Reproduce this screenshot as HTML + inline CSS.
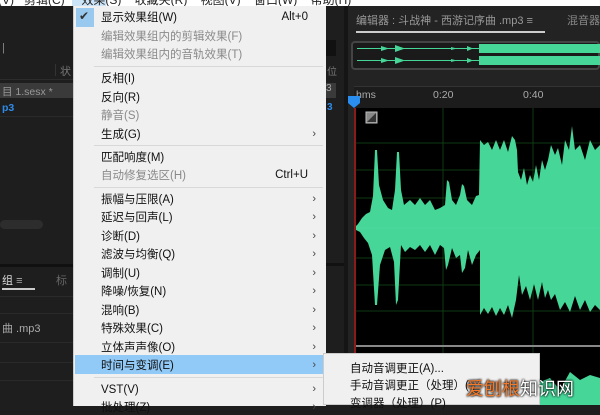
<!DOCTYPE html>
<html><head><meta charset="utf-8"><style>
*{margin:0;padding:0;box-sizing:border-box}
body{width:600px;height:405px;overflow:hidden;background:#1e1e1e;position:relative;font-family:"Liberation Sans","Noto Sans CJK SC",sans-serif}
.a{position:absolute;white-space:nowrap}
.menu{position:absolute;left:73px;top:6px;width:253px;height:400px;background:#f0f0f0;border-left:1px solid #ccc}
.it{position:absolute;left:27px;font-size:11.5px;color:#111;white-space:nowrap;line-height:14px}
.dis{color:#8a8a8a}
.arr{position:absolute;right:10px;font-size:11px;color:#444}
.sep{position:absolute;left:20px;right:3px;height:1px;background:#d8d8d8}
.sc{position:absolute;right:18px;font-size:11.5px;color:#111}
</style></head><body>
<div class="a" style="left:0;top:0;width:600px;height:6px;background:#fff;overflow:hidden">
 <div class="a" style="left:72px;top:0;width:34px;height:6px;background:#cce4f7"></div>
 <div class="a" style="left:-2px;top:-9px;font-size:12px;color:#222">(V)&nbsp;&nbsp; 剪辑(C)&nbsp;&nbsp;&nbsp;&nbsp; 效果(S)&nbsp;&nbsp;&nbsp; 收藏夹(R)&nbsp;&nbsp;&nbsp; 视图(V)&nbsp;&nbsp;&nbsp; 窗口(W)&nbsp;&nbsp;&nbsp; 帮助(H)</div>
</div>
<div class="a" style="left:0;top:6px;width:73px;height:258px;background:#1e1e1e"></div>
<div class="a" style="left:2px;top:42px;font-size:11px;color:#888">|</div>
<div class="a" style="left:0;top:62px;width:73px;height:18px;border-bottom:1px solid #2c2c2c"></div>
<div class="a" style="left:55px;top:64px;width:1px;height:12px;background:#333"></div>
<div class="a" style="left:60px;top:63px;font-size:11px;color:#777">状</div>
<div class="a" style="left:0;top:83px;width:73px;height:15px;background:#3a3a3a"></div>
<div class="a" style="left:2px;top:84px;font-size:10.5px;color:#999">目 1.sesx *</div>
<div class="a" style="left:2px;top:102px;font-size:10.5px;color:#2d8ceb;font-weight:bold">p3</div>
<div class="a" style="left:0;top:116px;width:73px;height:1px;background:#2a2a2a"></div>
<div class="a" style="left:0;top:220px;width:43px;height:9px;background:#2d2d2d;border-radius:5px"></div>
<div class="a" style="left:0;top:264px;width:73px;height:3px;background:#111"></div>
<div class="a" style="left:0;top:267px;width:73px;height:138px;background:#1e1e1e"></div>
<div class="a" style="left:2px;top:272px;font-size:11px;color:#ddd">组 <span style="color:#aaa">≡</span></div>
<div class="a" style="left:2px;top:288px;width:33px;height:2px;background:#ccc"></div>
<div class="a" style="left:56px;top:272px;font-size:11px;color:#666">标</div>
<div class="a" style="left:0;top:296px;width:73px;height:1px;background:#2a2a2a"></div>
<div class="a" style="left:0;top:313px;width:73px;height:1px;background:#2a2a2a"></div>
<div class="a" style="left:2px;top:320px;font-size:11px;color:#aaa">曲 .mp3</div>
<div class="a" style="left:0;top:342px;width:73px;height:1px;background:#2a2a2a"></div>
<div class="a" style="left:0;top:362px;width:73px;height:1px;background:#2a2a2a"></div>
<div class="a" style="left:0;top:380px;width:73px;height:1px;background:#2a2a2a"></div>
<div class="a" style="left:326px;top:6px;width:18px;height:399px;background:#1e1e1e"></div>
<div class="a" style="left:326px;top:40px;width:10px;height:16px;background:#111"></div>
<div class="a" style="left:327px;top:63px;font-size:10px;color:#777">位</div>
<div class="a" style="left:326px;top:83px;width:10px;height:15px;background:#3a3a3a;font-size:10px;color:#aaa">3</div>
<div class="a" style="left:327px;top:102px;font-size:10px;color:#2d8ceb;font-weight:bold">3</div>
<div class="a" style="left:326px;top:263px;width:18px;height:3px;background:#111"></div>
<div class="a" style="left:344px;top:6px;width:4px;height:399px;background:#151515"></div>
<div class="a" style="left:348px;top:6px;width:252px;height:399px;background:#232323"></div>
<div class="a" style="left:356px;top:12px;font-size:11px;color:#999">编辑器 : 斗战神 - 西游记序曲 .mp3 ≡</div>
<div class="a" style="left:356px;top:31px;width:189px;height:2px;background:#ccc"></div>
<div class="a" style="left:567px;top:12px;font-size:11px;color:#888">混音器</div>
<div class="a" style="left:351px;top:41px;width:249px;height:29px;border:2px solid #444;border-radius:4px;background:#1a1a1a"></div>
<svg class="a" style="left:351px;top:41px" width="249" height="29">
<g fill="#45d698">
<rect x="6" y="7" width="122" height="1"/>
<path d="M30 5l8 2.5-8 2.5zM44 4l10 3.5-10 3.5zM100 6l6 1.5-6 1.5zM116 5l6 2.5-6 2.5z"/>
<rect x="128" y="3" width="121" height="9"/>
<rect x="6" y="19" width="122" height="1"/>
<path d="M30 17l8 2.5-8 2.5zM44 16l10 3.5-10 3.5zM100 18l6 1.5-6 1.5zM116 17l6 2.5-6 2.5z"/>
<rect x="128" y="15" width="121" height="9"/>
</g></svg>
<div class="a" style="left:354px;top:86px;width:246px;height:22px;background:#1c1c1c;border-top:1px solid #333"></div>
<div class="a" style="left:356px;top:89px;font-size:10.5px;color:#aaa">hms</div>
<div class="a" style="left:433px;top:89px;font-size:10.5px;color:#aaa">0:20</div>
<div class="a" style="left:523px;top:89px;font-size:10.5px;color:#aaa">0:40</div>
<svg class="a" style="left:354px;top:108px" width="246" height="297">
<rect width="246" height="297" fill="#000"/>
<g stroke="#0f3a12" stroke-width="1">
<line x1="0" y1="35" x2="246" y2="35"/><line x1="0" y1="62" x2="246" y2="62"/><line x1="0" y1="90" x2="246" y2="90"/>
<line x1="0" y1="150" x2="246" y2="150"/><line x1="0" y1="177" x2="246" y2="177"/><line x1="0" y1="203" x2="246" y2="203"/>
<line x1="89" y1="0" x2="89" y2="297"/><line x1="179" y1="0" x2="179" y2="297"/>
</g>
<g fill="#45d698" transform="translate(-354,-108)">
<polygon points="354,228 358,224 362,218 366,214 370,212 373,196 375,150 377,150 379,185 383,200 388,208 392,210 395,190 397,152 399,152 401,190 404,205 410,200 415,205 420,198 425,205 430,200 435,210 440,208 445,205 447,180 449,182 452,200 456,205 460,195 462,184 464,186 467,200 472,205 476,196 479,195 480,140 484,145 488,142 492,150 496,140 500,150 504,140 508,152 512,136 515,140 517,150 518,172 521,180 524,168 527,185 530,175 533,182 536,165 539,180 542,160 545,170 548,160 551,145 555,155 558,148 562,165 565,140 569,150 572,126 575,150 580,145 585,160 590,140 595,150 600,145 600,310 595,305 590,312 585,300 580,310 575,296 570,312 565,302 560,310 555,294 551,300 548,290 545,298 542,282 538,300 534,284 530,300 526,286 522,295 519,275 516,300 512,318 508,305 504,315 500,308 496,316 492,307 488,314 484,308 480,315 480,250 476,255 472,265 468,250 465,268 462,273 460,255 456,258 452,248 448,265 446,270 444,248 440,245 435,255 430,245 425,252 420,245 415,250 410,247 405,252 401,245 398,300 396,305 394,262 390,247 385,250 380,265 377,305 375,305 372,255 368,243 364,238 360,232 356,230"/>
<polygon points="480,405 480,380 490,385 500,378 510,390 520,375 530,392 540,382 550,378 560,390 570,372 580,380 590,375 600,378 600,405"/>
</g>
<line x1="0" y1="120" x2="246" y2="120" stroke="#6fe0b0" stroke-width="0.6" opacity="0.5"/>
<rect x="0" y="237" width="246" height="2" fill="#888"/>
<rect x="0" y="0" width="2" height="297" fill="#8b1a1a"/>
<rect x="12" y="4" width="11" height="11" fill="#888" stroke="#bbb"/>
<path d="M13 14L22 5V14Z" fill="#333"/>
</svg>
<svg class="a" style="left:347px;top:95px" width="14" height="14"><path d="M1 1h12v7l-6 5-6-5z" fill="#2a8ef0"/></svg>
<div class="menu">
 <div class="a" style="left:2px;top:2px;width:18px;height:19px;background:#99c9ef"></div>
 <div class="a" style="left:5px;top:3px;font-size:12px;color:#333">✔</div>
 <div class="it" style="top:5px">显示效果组(W)</div><div class="sc" style="top:5px">Alt+0</div>
 <div class="it dis" style="top:24px">编辑效果组内的剪辑效果(F)</div>
 <div class="it dis" style="top:42px">编辑效果组内的音轨效果(T)</div>
 <div class="sep" style="top:60px"></div>
 <div class="it" style="top:66px">反相(I)</div>
 <div class="it" style="top:85px">反向(R)</div>
 <div class="it dis" style="top:103px">静音(S)</div>
 <div class="it" style="top:122px">生成(G)</div><div class="arr" style="top:122px">›</div>
 <div class="sep" style="top:139px"></div>
 <div class="it" style="top:145px">匹配响度(M)</div>
 <div class="it dis" style="top:163px">自动修复选区(H)</div><div class="sc dis" style="top:163px">Ctrl+U</div>
 <div class="sep" style="top:181px"></div>
 <div class="it" style="top:187px">振幅与压限(A)</div><div class="arr" style="top:187px">›</div>
 <div class="it" style="top:205px">延迟与回声(L)</div><div class="arr" style="top:205px">›</div>
 <div class="it" style="top:224px">诊断(D)</div><div class="arr" style="top:224px">›</div>
 <div class="it" style="top:242px">滤波与均衡(Q)</div><div class="arr" style="top:242px">›</div>
 <div class="it" style="top:261px">调制(U)</div><div class="arr" style="top:261px">›</div>
 <div class="it" style="top:279px">降噪/恢复(N)</div><div class="arr" style="top:279px">›</div>
 <div class="it" style="top:298px">混响(B)</div><div class="arr" style="top:298px">›</div>
 <div class="it" style="top:316px">特殊效果(C)</div><div class="arr" style="top:316px">›</div>
 <div class="it" style="top:335px">立体声声像(O)</div><div class="arr" style="top:335px">›</div>
 <div class="a" style="left:1px;top:349px;width:248px;height:19px;background:#91c9f7"></div>
 <div class="it" style="top:353px">时间与变调(E)</div><div class="arr" style="top:353px">›</div>
 <div class="sep" style="top:371px"></div>
 <div class="it" style="top:377px">VST(V)</div><div class="arr" style="top:377px">›</div>
 <div class="it" style="top:395px">批处理(Z)</div><div class="arr" style="top:395px">›</div>
</div>
<div class="a" style="left:323px;top:353px;width:217px;height:52px;background:#f0f0f0;border:1px solid #ccc"></div>
<div class="a" style="left:350px;top:360px;font-size:11.5px;color:#111">自动音调更正(A)...</div>
<div class="a" style="left:350px;top:377px;font-size:11.5px;color:#111">手动音调更正（处理）(</div>
<div class="a" style="left:350px;top:395px;font-size:11.5px;color:#111">变调器（处理）(P)</div>
<div class="a" style="left:466px;top:375px;font-size:18px;text-shadow:0 0 2px #000,0 0 2px #000"><span style="color:#f27a2a">爱刨根</span><span style="color:#fff">知识网</span></div>
</body></html>
